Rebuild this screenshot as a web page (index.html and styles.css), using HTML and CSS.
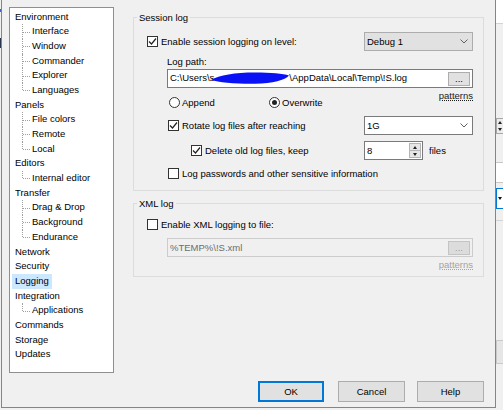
FILE: index.html
```html
<!DOCTYPE html>
<html lang="en">
<head>
<meta charset="utf-8">
<title>Preferences - Logging</title>
<link rel="stylesheet" href="styles.css">
</head>
<body>
<!-- window behind the dialog -->
<div class="backdrop">
  <div class="bd bd-head"></div>
  <div class="bd bd-rule bd-rule1"></div>
  <div class="bd bd-spin"><span class="tri up"></span><span class="tri down"></span></div>
  <div class="bd bd-field"></div>
  <div class="bd bd-combo"><span class="tri down dark"></span></div>
  <div class="bd bd-rule bd-rule2"></div>
  <div class="bd bd-btn"></div>
  <div class="bd bd-left1"></div>
  <div class="bd bd-left2"></div>
</div>

<div class="dialog">
  <div class="main">
    <ul class="tree">
      <li class="node">Environment</li>
      <li class="leaf">Interface</li>
      <li class="leaf">Window</li>
      <li class="leaf">Commander</li>
      <li class="leaf">Explorer</li>
      <li class="leaf last">Languages</li>
      <li class="node">Panels</li>
      <li class="leaf">File colors</li>
      <li class="leaf">Remote</li>
      <li class="leaf last">Local</li>
      <li class="node">Editors</li>
      <li class="leaf last">Internal editor</li>
      <li class="node">Transfer</li>
      <li class="leaf">Drag &amp; Drop</li>
      <li class="leaf">Background</li>
      <li class="leaf last">Endurance</li>
      <li class="node">Network</li>
      <li class="node">Security</li>
      <li class="node"><span class="selected">Logging</span></li>
      <li class="node">Integration</li>
      <li class="leaf last">Applications</li>
      <li class="node">Commands</li>
      <li class="node">Storage</li>
      <li class="node">Updates</li>
    </ul>

    <div class="panel">
      <div class="group group-session">
        <span class="group-title">Session log</span>

        <div class="row row-top">
          <div class="check">
            <span class="box"><svg width="9" height="9" viewBox="0 0 9 9"><polyline points="1,4.5 3.5,7 8,1.5" fill="none" stroke="#222" stroke-width="1.2"/></svg></span>
            <span>Enable session logging on level:</span>
          </div>
          <div class="combo combo-grey">
            <span class="combo-text">Debug 1</span>
            <svg class="chev" width="8" height="5" viewBox="0 0 8 5"><polyline points="0.5,0.5 4,4 7.5,0.5" fill="none" stroke="#606060" stroke-width="1"/></svg>
          </div>
        </div>

        <div class="field-label">Log path:</div>
        <div class="field">
          <span class="field-text">C:\Users\s<span class="redact"><svg width="78" height="14" viewBox="0 0 78 14"><path d="M0,9 C8,4 24,1.5 44,1.5 C60,1.5 72,2.5 78,4.5 C74,9 62,12.5 44,12.8 C24,13 8,11.5 0,9 Z" fill="#0a12f5"/></svg></span>\AppData\Local\Temp\!S.log</span>
          <span class="dots">...</span>
        </div>
        <div class="patterns">patterns</div>

        <div class="row radios">
          <div class="radio-item first"><span class="radio"></span><span>Append</span></div>
          <div class="radio-item"><span class="radio on"></span><span>Overwrite</span></div>
        </div>

        <div class="row row-split rotate">
          <div class="split-left">
            <div class="check">
              <span class="box"><svg width="9" height="9" viewBox="0 0 9 9"><polyline points="1,4.5 3.5,7 8,1.5" fill="none" stroke="#222" stroke-width="1.2"/></svg></span>
              <span>Rotate log files after reaching</span>
            </div>
          </div>
          <div class="combo combo-white">
            <span class="combo-text">1G</span>
            <svg class="chev" width="8" height="5" viewBox="0 0 8 5"><polyline points="0.5,0.5 4,4 7.5,0.5" fill="none" stroke="#606060" stroke-width="1"/></svg>
          </div>
        </div>

        <div class="row row-split keep">
          <div class="split-left deep">
            <div class="check">
              <span class="box"><svg width="9" height="9" viewBox="0 0 9 9"><polyline points="1,4.5 3.5,7 8,1.5" fill="none" stroke="#222" stroke-width="1.2"/></svg></span>
              <span>Delete old log files, keep</span>
            </div>
          </div>
          <div class="spin">
            <span class="spin-text">8</span>
            <span class="spin-btns">
              <span class="spin-btn"><span class="tri up"></span></span>
              <span class="spin-btn"><span class="tri down"></span></span>
            </span>
          </div>
          <span class="unit">files</span>
        </div>

        <div class="row pw">
          <div class="check">
            <span class="box"></span>
            <span>Log passwords and other sensitive information</span>
          </div>
        </div>
      </div>

      <div class="group group-xml">
        <span class="group-title">XML log</span>
        <div class="row xml-check">
          <div class="check">
            <span class="box"></span>
            <span>Enable XML logging to file:</span>
          </div>
        </div>
        <div class="field disabled">
          <span class="field-text">%TEMP%\!S.xml</span>
          <span class="dots">...</span>
        </div>
        <div class="patterns disabled">patterns</div>
      </div>
    </div>
  </div>

  <div class="buttons">
    <span class="btn default">OK</span>
    <span class="btn cancel">Cancel</span>
    <span class="btn help">Help</span>
  </div>
</div>
</body>
</html>
```

FILE: styles.css
```css
* { box-sizing: border-box; }

html, body {
  margin: 0;
  padding: 0;
}

body {
  width: 503px;
  height: 410px;
  position: relative;
  overflow: hidden;
  background: #f0f0f0;
  font-family: "Liberation Sans", Arial, sans-serif;
  font-size: 9.5px;
  color: #000;
}

/* ---------- window behind the dialog ---------- */
.backdrop {
  position: absolute;
  inset: 0;
}
.bd { position: absolute; }
.bd-head { left: 496px; top: 0; width: 7px; height: 23px; background: #fff; }
.bd-rule { left: 496px; width: 7px; height: 1px; background: #d4d4d4; }
.bd-rule1 { top: 23px; }
.bd-rule2 { top: 220px; }
.bd-spin {
  left: 496px; top: 118px; width: 7px; height: 16px;
  background: #ececec;
  border: 1px solid #a8a8a8;
  border-right: none;
  display: flex; flex-direction: column; align-items: center; justify-content: space-around;
}
.bd-field {
  left: 496px; top: 162px; width: 7px; height: 21px;
  background: #fff;
  border-top: 1px solid #c8c8c8;
  border-bottom: 1px solid #c8c8c8;
}
.bd-combo {
  left: 496px; top: 188px; width: 7px; height: 21px;
  background: #fff;
  border: 1px solid #0078d7;
  border-right: none;
  display: flex; align-items: center; justify-content: center;
}
.bd-btn {
  left: 496px; top: 340px; width: 7px; height: 24px;
  background: #e6e6e6;
  border: 1px solid #c9c9c9;
  border-right: none;
}
.bd-left1 { left: 0; top: 9px; width: 1px; height: 3px; background: #3a64c8; }
.bd-left2 { left: 0; top: 38px; width: 1px; height: 10px; background: #2a3550; }

/* small arrow glyphs */
.tri {
  display: block;
  width: 0;
  height: 0;
  border-left: 2.5px solid transparent;
  border-right: 2.5px solid transparent;
}
.tri.up { border-bottom: 3px solid #222; }
.tri.down { border-top: 3px solid #222; }
.tri.dark { border-top-color: #111; }

/* ---------- dialog ---------- */
.dialog {
  position: absolute;
  left: 1px;
  top: -20px;
  width: 495px;
  height: 428px;
  background: #f0f0f0;
  border: 1px solid #858585;
  padding: 26px 11px 5px 7px;
  display: flex;
  flex-direction: column;
}

.main {
  display: flex;
  height: 366px;
  gap: 19px;
}

/* ---------- navigation tree ---------- */
.tree {
  list-style: none;
  margin: 0;
  padding: 1.5px 0 0 0;
  width: 105px;
  height: 366px;
  flex: none;
  background: #fff;
  border: 1px solid #8f8f8f;
}
.tree li {
  position: relative;
  height: 14.7px;
  line-height: 14.7px;
  white-space: nowrap;
}
.tree .node { padding-left: 5px; }
.tree .leaf { padding-left: 22px; }
.tree .leaf::before {
  content: "";
  position: absolute;
  left: 12px;
  top: 0;
  bottom: 0;
  border-left: 1px dotted #a0a0a0;
}
.tree .leaf.last::before { bottom: 50%; }
.tree .leaf::after {
  content: "";
  position: absolute;
  left: 13px;
  top: 50%;
  width: 7px;
  border-top: 1px dotted #a0a0a0;
}
.tree .selected {
  display: inline-block;
  margin-left: -3px;
  padding: 0 3px;
  background: #cce8ff;
}

/* ---------- right panel ---------- */
.panel {
  width: 351px;
  padding-top: 10px;
  display: flex;
  flex-direction: column;
}

.group {
  position: relative;
  border: 1px solid #dcdcdc;
  padding: 14px 10px 0 13px;
}
.group-session { height: 174px; }
.group-xml { height: 74px; margin-top: 12px; }

.group-title {
  position: absolute;
  left: 3px;
  top: -7px;
  padding: 0 2px;
  line-height: 13px;
  background: #f0f0f0;
}

.row {
  display: flex;
  align-items: center;
}

.row-top {
  height: 19px;
  justify-content: space-between;
}

/* checkbox */
.check {
  display: flex;
  align-items: center;
  gap: 3px;
  white-space: nowrap;
}
.box {
  width: 11px;
  height: 11px;
  flex: none;
  background: #fff;
  border: 1px solid #333;
  display: flex;
  align-items: center;
  justify-content: center;
}

/* drop-down lists */
.combo {
  width: 109px;
  height: 19px;
  flex: none;
  display: flex;
  align-items: center;
  padding: 0 4px 0 2px;
}
.combo-grey { background: #e1e1e1; border: 1px solid #adadad; }
.combo-white { background: #fff; border: 1px solid #7a7a7a; }
.combo-text { flex: 1; }
.chev { flex: none; display: block; }

/* path fields */
.field-label {
  margin: 4px 0 1px 20px;
  line-height: 13px;
}
.field {
  margin-left: 20px;
  height: 19px;
  display: flex;
  align-items: center;
  background: #fff;
  border: 1px solid #7a7a7a;
  padding: 0 2px;
  white-space: nowrap;
}
.field-text { flex: 1; overflow: hidden; }
.redact {
  display: inline-block;
  vertical-align: middle;
  margin: -2px 0 0 -3px;
  height: 14px;
  line-height: 0;
}
.dots {
  width: 22px;
  height: 14px;
  flex: none;
  background: #e1e1e1;
  border: 1px solid #adadad;
  text-align: center;
  line-height: 11px;
}
.field.disabled {
  background: #f0f0f0;
  border-color: #cccccc;
  color: #6d6d6d;
}
.field.disabled .dots {
  background: #dcdcdc;
  border-color: #c4c4c4;
  color: #a0a0a0;
}

.patterns {
  margin-top: 2px;
  line-height: 11px;
  text-align: right;
  color: #1a1a1a;
  text-decoration: underline dotted;
  text-underline-offset: 1px;
}
.patterns.disabled { color: #a3a3a3; }

/* radio buttons */
.radios {
  margin-top: -4px;
  height: 11px;
  padding-left: 22px;
}
.radio-item {
  display: flex;
  align-items: center;
  gap: 2px;
}
.radio-item.first { width: 100px; }
.radio {
  width: 11px;
  height: 11px;
  border-radius: 50%;
  border: 1px solid #333;
  background: #fff;
  display: flex;
  align-items: center;
  justify-content: center;
}
.radio.on::after {
  content: "";
  width: 5px;
  height: 5px;
  border-radius: 50%;
  background: #222;
}

/* rotation rows */
.row-split { height: 19px; }
.split-left { width: 217px; padding-left: 21px; flex: none; }
.split-left.deep { padding-left: 44px; }
.rotate { margin-top: 8px; }
.keep { margin-top: 6px; }

.spin {
  width: 59px;
  height: 19px;
  flex: none;
  display: flex;
  align-items: center;
  background: #fff;
  border: 1px solid #7a7a7a;
  padding: 0 1px 0 2px;
}
.spin-text { flex: 1; }
.spin-btns {
  display: flex;
  flex-direction: column;
  width: 12px;
  height: 15px;
}
.spin-btn {
  flex: 1;
  background: #e6e6e6;
  border: 1px solid #b4b4b4;
  display: flex;
  align-items: center;
  justify-content: center;
}
.spin-btn + .spin-btn { border-top: none; }
.unit { margin-left: 6px; }

.pw { margin-top: 7px; height: 13px; padding-left: 21px; }
.xml-check { height: 13px; }
.group-xml .field { margin-top: 7px; }

/* ---------- button bar ---------- */
.buttons {
  margin-top: 8px;
  height: 21px;
  display: flex;
  justify-content: flex-end;
}
.btn {
  width: 67px;
  height: 21px;
  display: flex;
  align-items: center;
  justify-content: center;
  background: #e1e1e1;
  border: 1px solid #adadad;
}
.btn.default { width: 66px; border: 2px solid #0078d7; }
.btn.cancel { margin-left: 14px; }
.btn.help { margin-left: 12px; }
```
